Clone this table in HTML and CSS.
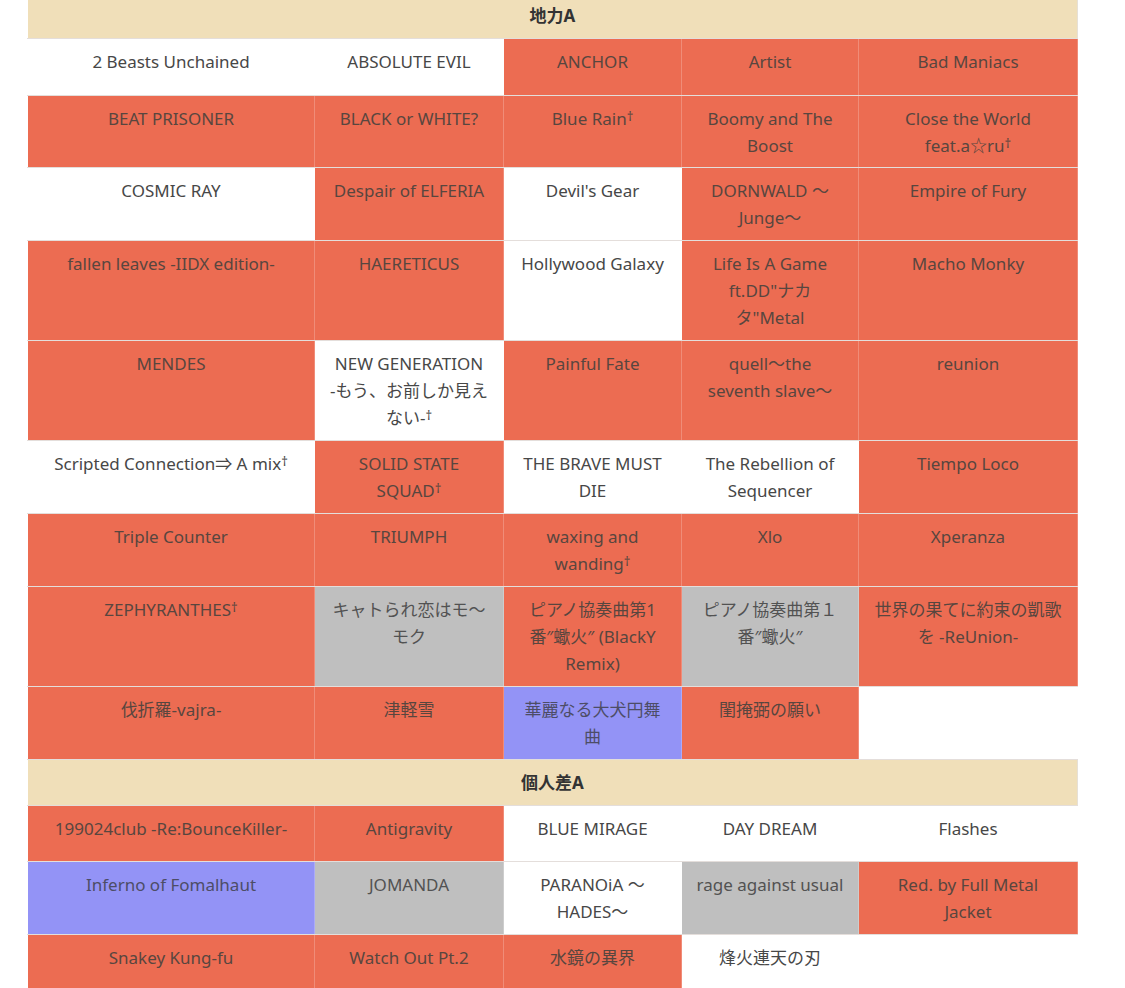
FILE: index.html
```html
<!DOCTYPE html>
<html lang="ja">
<head>
<meta charset="utf-8">
<title>難易度表</title>
<link rel="stylesheet" href="styles.css">
</head>
<body>
<div class="page">
<table class="songs">
<colgroup>
<col class="c1"><col class="c2"><col class="c3"><col class="c4"><col class="c5">
</colgroup>
<tbody>
<tr class="head"><th colspan="5">地力A</th></tr>
<tr>
<td class="w">2 Beasts Unchained</td>
<td class="w">ABSOLUTE EVIL</td>
<td class="o">ANCHOR</td>
<td class="o">Artist</td>
<td class="o">Bad Maniacs</td>
</tr>
<tr class="r2">
<td class="o">BEAT PRISONER</td>
<td class="o">BLACK or WHITE?</td>
<td class="o">Blue Rain<span class="dag">†</span></td>
<td class="o">Boomy and The Boost</td>
<td class="o">Close the World feat.a☆ru<span class="dag">†</span></td>
</tr>
<tr>
<td class="w">COSMIC RAY</td>
<td class="o">Despair of ELFERIA</td>
<td class="w">Devil's Gear</td>
<td class="o">DORNWALD ～Junge～</td>
<td class="o">Empire of Fury</td>
</tr>
<tr>
<td class="o">fallen leaves -IIDX edition-</td>
<td class="o">HAERETICUS</td>
<td class="w">Hollywood Galaxy</td>
<td class="o">Life Is A Game ft.DD"ナカタ"Metal</td>
<td class="o">Macho Monky</td>
</tr>
<tr>
<td class="o">MENDES</td>
<td class="w">NEW GENERATION -&#8288;もう、お前しか見えない-<span class="dag">†</span></td>
<td class="o">Painful Fate</td>
<td class="o">quell～the seventh slave～</td>
<td class="o">reunion</td>
</tr>
<tr>
<td class="w">Scripted Connection⇒ A mix<span class="dag">†</span></td>
<td class="o">SOLID STATE SQUAD<span class="dag">†</span></td>
<td class="w">THE BRAVE MUST DIE</td>
<td class="w">The Rebellion of Sequencer</td>
<td class="o">Tiempo Loco</td>
</tr>
<tr>
<td class="o">Triple Counter</td>
<td class="o">TRIUMPH</td>
<td class="o">waxing and wanding<span class="dag">†</span></td>
<td class="o">Xlo</td>
<td class="o">Xperanza</td>
</tr>
<tr>
<td class="o">ZEPHYRANTHES<span class="dag">†</span></td>
<td class="g">キャトられ恋はモ～モク</td>
<td class="o">ピアノ協奏曲第1番″蠍火″ (BlackY Remix)</td>
<td class="g">ピアノ協奏曲第１番″蠍火″</td>
<td class="o">世界の果てに約束の凱歌を -ReUnion-</td>
</tr>
<tr>
<td class="o">伐折羅-vajra-</td>
<td class="o">津軽雪</td>
<td class="b">華麗なる大犬円舞曲</td>
<td class="o">閨掩弼の願い</td>
<td class="w"></td>
</tr>
<tr class="head"><th colspan="5">個人差A</th></tr>
<tr class="r1">
<td class="o">199024club -Re:BounceKiller-</td>
<td class="o">Antigravity</td>
<td class="w">BLUE MIRAGE</td>
<td class="w">DAY DREAM</td>
<td class="w">Flashes</td>
</tr>
<tr>
<td class="b">Inferno of Fomalhaut</td>
<td class="g">JOMANDA</td>
<td class="w">PARANOiA ～HADES～</td>
<td class="g">rage against usual</td>
<td class="o">Red. by Full Metal Jacket</td>
</tr>
<tr>
<td class="o">Snakey Kung-fu</td>
<td class="o">Watch Out Pt.2</td>
<td class="o">水鏡の異界</td>
<td class="w">烽火連天の刃</td>
<td class="w"></td>
</tr>
</tbody>
</table>
</div>
</body>
</html>
```
FILE: styles.css
```css
html, body {
  margin: 0;
  padding: 0;
  background: #ffffff;
}

body {
  font-family: "Noto Sans", "Noto Sans CJK JP", sans-serif;
  font-size: 17px;
  color: #4a4a4a;
}

.page {
  padding-left: 27px;
  margin-top: -8px;
}

.songs {
  width: 1050px;
  table-layout: fixed;
  border-collapse: collapse;
}

.c1 { width: 287px; }
.c2 { width: 189px; }
.c3 { width: 178px; }
.c4 { width: 177px; }
.c5 { width: 219px; }

.songs tr {
  height: 57px;
}

.songs td,
.songs th {
  padding: 9px 14px 9px;
  line-height: 27px;
  font-size: 17px;
  text-align: center;
  vertical-align: top;
  font-weight: normal;
  border-top: 1px solid #e4dedb;
  border-bottom: 1px solid #e4dedb;
  border-left: 1px solid rgba(255, 255, 255, 0.22);
  border-right: 1px solid rgba(255, 255, 255, 0.22);
}

.songs tr.r2 td {
  padding-bottom: 8px;
}

.songs tr.r1 {
  height: 56px;
}

.songs tr.head {
  height: 46px;
}

.songs th {
  background: #f0dfb9;
  color: #333333;
  font-weight: bold;
  border-right: 1px solid #e6e0d6;
}

.w { background: #ffffff; color: #474747; }
.o { background: #ec6c52; color: #58463f; }
.g { background: #bfbfbf; color: #525252; }
.b { background: #9393f6; color: #4d4d66; }

.dag {
  font-size: 13px;
  line-height: 0;
  vertical-align: 4px;
}
```
